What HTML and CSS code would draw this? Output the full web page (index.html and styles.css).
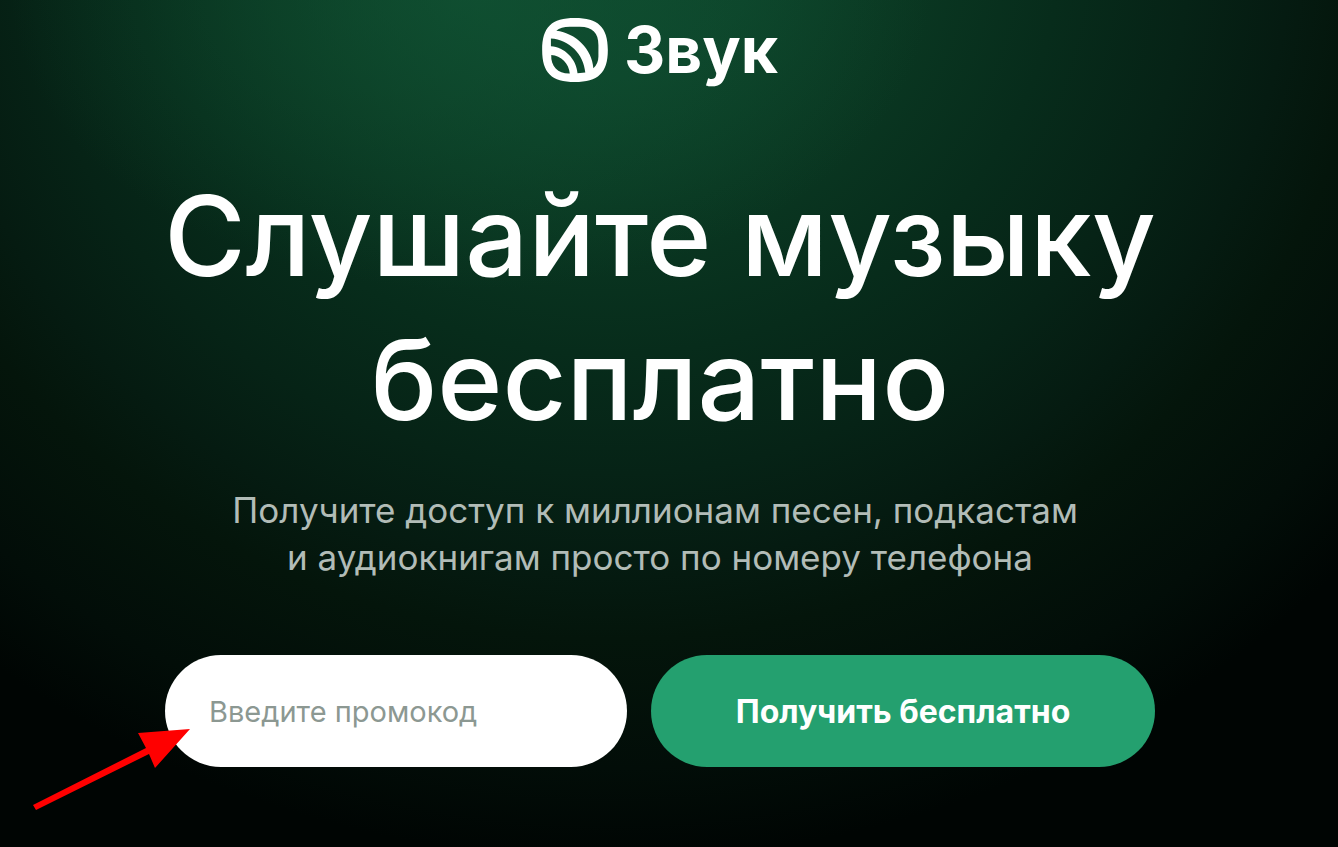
FILE: index.html
```html
<!DOCTYPE html>
<html lang="ru">
<head>
<meta charset="utf-8">
<meta name="viewport" content="width=device-width, initial-scale=1">
<title>Звук</title>
<link rel="stylesheet" href="styles.css">
</head>
<body class="page">
<main class="promo">
  <a class="logo" href="#">
    <svg class="logo-mark" viewBox="0 0 195 190" aria-hidden="true">
      <path fill="#fff" fill-rule="evenodd" d="M97 0C166 0 195 27 195 95S166 190 97 190 0 163 0 95 28 0 97 0ZM42 38C100 45 148 92 152 149Q167 135 167 114V80C167 45 150 26 112 26H82Q55 26 42 38ZM26 61V84C66 86 102 122 105 164L128 162C124 108 80 64 26 61ZM27 110C25 144 48 166 82 165C80 136 56 112 27 110Z"/>
    </svg>
    <span class="logo-name">Звук</span>
  </a>
  <h1 class="title">Слушайте музыку бесплатно</h1>
  <p class="lead">Получите доступ к миллионам песен, подкастам&nbsp;<br>и аудиокнигам просто по номеру телефона</p>
  <form class="form">
    <div class="field">
      <input class="code" type="text" placeholder="Введите промокод" aria-label="Введите промокод">
      <svg class="arrow" viewBox="0 0 158 82" aria-hidden="true">
        <path fill="#f00" d="M157 0L122 39 116 25 3 81 0 76 113 19 105 4Z"/>
      </svg>
    </div>
    <button class="submit" type="button">Получить бесплатно</button>
  </form>
</main>
</body>
</html>
```
FILE: styles.css
```css
* {
  box-sizing: border-box;
}

.page {
  min-height: 100vh;
  margin: 0;
  padding: 18px 18px 80px 0;
  background: radial-gradient(ellipse 1000px 920px at 610px -60px, #0d472c 0%, #0c4229 15%, #0a3822 29%, #072c1b 45%, #062316 58%, #051b11 68%, #04150b 76%, #020d08 90%, #000503 100%) #000503;
  color: #fff;
  font-family: Inter, "Liberation Sans", sans-serif;
}

.page::before {
  content: "";
  position: absolute;
  inset: 0;
  z-index: -1;
  background: radial-gradient(ellipse 460px 300px at 470px -10px, rgb(17 84 52 / 70%), transparent);
}

.promo {
  display: flex;
  flex-direction: column;
  align-items: center;
  max-width: 1040px;
  margin: 0 auto;
  text-align: center;
}

.logo {
  display: flex;
  align-items: center;
  gap: 16px;
  height: 64px;
  color: inherit;
  text-decoration: none;
}

.logo-mark {
  width: 66px;
  height: 64px;
}

.logo-name {
  font-size: 64px;
  font-weight: 700;
  line-height: 64px;
}

.title {
  margin: 82px 0 35px;
  font-size: 111px;
  font-weight: 500;
  line-height: 144px;
}

.lead {
  margin: 0;
  color: #b2bcb7;
  font-size: 35px;
  line-height: 47px;
}

.form {
  display: flex;
  gap: 24px;
  width: 100%;
  max-width: 990px;
  margin-top: 74px;
}

.field {
  position: relative;
  flex: 11;
}

.code,
.submit {
  width: 100%;
  height: 112px;
  border: 0;
  border-radius: 56px;
  font-family: inherit;
}

.code {
  padding: 0 44px;
  background: #fff;
  color: #03120a;
  font-size: 29px;
}

.code::placeholder {
  color: #8c9892;
  opacity: 1;
}

.submit {
  flex: 12;
  padding: 0;
  background: #24a06f;
  color: #fff;
  font-size: 32px;
  font-weight: 700;
}

.arrow {
  position: absolute;
  top: 74px;
  left: -132px;
  width: 158px;
  height: 82px;
}
```
